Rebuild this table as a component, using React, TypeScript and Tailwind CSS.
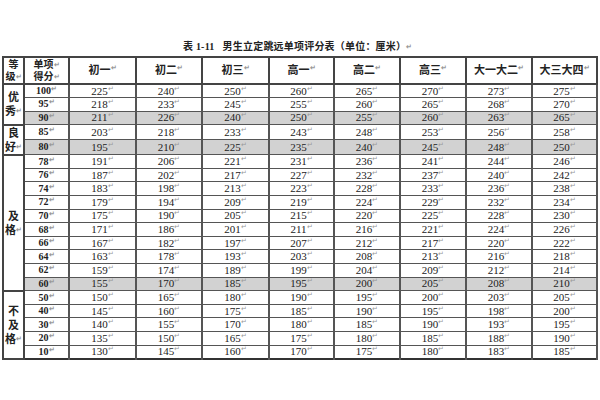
import React from "react";

const cols = ["初一", "初二", "初三", "高一", "高二", "高三", "大一大二", "大三大四"];

type Row = { score: number; vals: number[]; shade?: boolean };

const rows: Row[] = [
  { score: 100, vals: [225, 240, 250, 260, 265, 270, 273, 275] },
  { score: 95, vals: [218, 233, 245, 255, 260, 265, 268, 270] },
  { score: 90, vals: [211, 226, 240, 250, 255, 260, 263, 265], shade: true },
  { score: 85, vals: [203, 218, 233, 243, 248, 253, 256, 258] },
  { score: 80, vals: [195, 210, 225, 235, 240, 245, 248, 250], shade: true },
  { score: 78, vals: [191, 206, 221, 231, 236, 241, 244, 246] },
  { score: 76, vals: [187, 202, 217, 227, 232, 237, 240, 242] },
  { score: 74, vals: [183, 198, 213, 223, 228, 233, 236, 238] },
  { score: 72, vals: [179, 194, 209, 219, 224, 229, 232, 234] },
  { score: 70, vals: [175, 190, 205, 215, 220, 225, 228, 230] },
  { score: 68, vals: [171, 186, 201, 211, 216, 221, 224, 226] },
  { score: 66, vals: [167, 182, 197, 207, 212, 217, 220, 222] },
  { score: 64, vals: [163, 178, 193, 203, 208, 213, 216, 218] },
  { score: 62, vals: [159, 174, 189, 199, 204, 209, 212, 214] },
  { score: 60, vals: [155, 170, 185, 195, 200, 205, 208, 210], shade: true },
  { score: 50, vals: [150, 165, 180, 190, 195, 200, 203, 205] },
  { score: 40, vals: [145, 160, 175, 185, 190, 195, 198, 200] },
  { score: 30, vals: [140, 155, 170, 180, 185, 190, 193, 195] },
  { score: 20, vals: [135, 150, 165, 175, 180, 185, 188, 190] },
  { score: 10, vals: [130, 145, 160, 170, 175, 180, 183, 185] },
];

// grade label cells: start row index -> [chars, rowspan]
const grades: Record<number, [string[], number]> = {
  0: [["优", "秀"], 3],
  3: [["良", "好"], 2],
  5: [["及", "格"], 10],
  15: [["不", "及", "格"], 5],
};

const widths = [21, 45, 67, 66, 67, 65, 66, 66, 66, 65];

function Mark() {
  return <span className="text-[7px] text-[#999] align-top">↵</span>;
}

export default function App() {
  return (
    <div
      className="w-[600px] h-[400px] bg-white overflow-hidden text-[#222]"
      style={{ fontFamily: '"Liberation Serif", "Noto Sans CJK SC", serif' }}
    >
      <div className="pt-[40px] h-[56px] pl-[183px] text-[10px] font-bold leading-[14px] tracking-[0.2px]">
        表 1-11&nbsp;&nbsp;&nbsp;男生立定跳远单项评分表（单位：厘米）<Mark />
      </div>
      <table className="ml-[2px] w-[594px] table-fixed border-collapse border-2 border-[#333] text-[11px] leading-none">
        <colgroup>
          {widths.map((w, i) => (
            <col key={i} style={{ width: w }} />
          ))}
        </colgroup>
        <thead>
          <tr className="h-[27px]">
            <th className="border-2 border-[#444] font-bold text-[10px] leading-[12px] p-0">
              等<br />
              级<Mark />
            </th>
            <th className="border-2 border-[#444] font-bold text-[10px] leading-[12px] p-0">
              单项<Mark />
              <br />
              得分<Mark />
            </th>
            {cols.map((c) => (
              <th key={c} className="border-2 border-[#444] font-bold text-[11px] p-0">
                {c}
                <Mark />
              </th>
            ))}
          </tr>
        </thead>
        <tbody>
          {rows.map((r, i) => {
            const g = grades[i];
            const bg = r.shade ? "bg-[#d2d2d2]" : "bg-white";
            return (
              <tr key={r.score} className="h-[13.6px]">
                {g && (
                  <td
                    rowSpan={g[1]}
                    className="border-2 border-[#444] bg-white p-0 text-center font-bold text-[11px] leading-[14px]"
                  >
                    {g[0].map((ch, k) => (
                      <div key={k}>
                        {ch}
                        {k === g[0].length - 1 && <Mark />}
                      </div>
                    ))}
                  </td>
                )}
                <td className={`border-x-2 border-y-[1.5px] border-[#555] p-0 text-center font-bold text-[10px] ${bg}`}>
                  {r.score}
                  <Mark />
                </td>
                {r.vals.map((v, k) => (
                  <td
                    key={k}
                    className={`border-x-2 border-y-[1.5px] border-[#555] p-0 text-center ${bg}`}
                  >
                    {v}
                    <Mark />
                  </td>
                ))}
              </tr>
            );
          })}
        </tbody>
      </table>
    </div>
  );
}
